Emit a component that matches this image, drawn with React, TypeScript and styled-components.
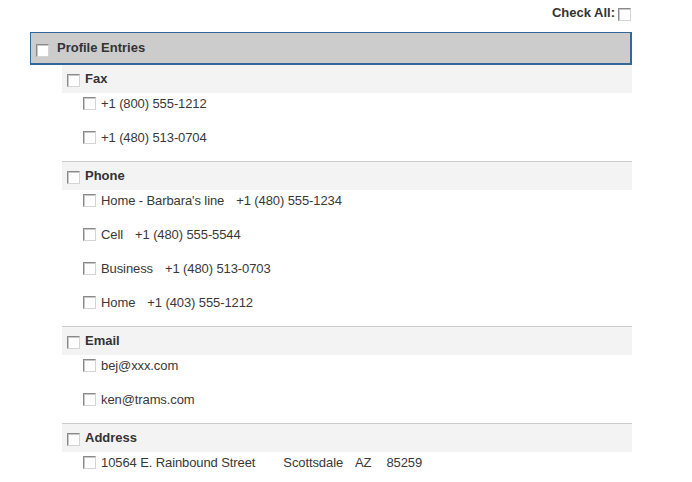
import React from "react";
import styled, { createGlobalStyle } from "styled-components";

const Global = createGlobalStyle`
  html, body { margin: 0; padding: 0; background: #ffffff; }
  body { font-family: "Liberation Sans", Arial, sans-serif; font-size: 13px; color: #333333; }
`;

const Page = styled.div`
  width: 602px;
  margin-left: 30px;
  padding-top: 6px;
`;

const CheckAllBar = styled.div`
  display: flex;
  justify-content: flex-end;
  align-items: center;
  height: 14px;
  margin-bottom: 12px;
  padding-right: 1px;
  gap: 3px;
`;

const BoldLabel = styled.span`
  font-weight: bold;
  font-size: 13px;
  color: #333333;
  line-height: 14px;
`;

const Box = styled.span<{ $drop?: number }>`
  display: inline-block;
  flex: none;
  box-sizing: border-box;
  width: 13px;
  height: 13px;
  margin-top: ${(p) => (p.$drop ?? 0) * 2}px;
  background: #ffffff;
  border: 1px solid;
  border-color: #8a8a8a #d4d4d4 #d4d4d4 #8a8a8a;
  box-shadow: inset 1px 1px 0 #c8c8c8;
`;

const ProfileHeader = styled.div`
  display: flex;
  align-items: center;
  gap: 8px;
  box-sizing: border-box;
  height: 33px;
  padding-left: 5px;
  background: #cccccc;
  border: 1px solid #336699;
  border-right-width: 2px;
  border-bottom-width: 2px;
`;

const SectionList = styled.div`
  margin-left: 32px;
`;

const Section = styled.div<{ $first?: boolean }>`
  border-top: ${(p) => (p.$first ? "none" : "1px solid #cccccc")};
`;

const SectionHead = styled.div`
  display: flex;
  align-items: center;
  gap: 5px;
  height: 28px;
  padding-left: 5px;
  background: #f3f3f3;
`;

const Items = styled.div`
  padding-left: 21px;
`;

const ItemRow = styled.div`
  display: flex;
  align-items: center;
  height: 20px;
  margin-bottom: 14px;
  color: #383838;
`;

const Part = styled.span<{ $gap: number }>`
  margin-left: ${(p) => p.$gap}px;
  white-space: nowrap;
  line-height: 15px;
  letter-spacing: -0.1px;
`;

type Item = { parts: string[]; gaps?: number[] };
type SectionData = { title: string; items: Item[] };

const data: SectionData[] = [
  {
    title: "Fax",
    items: [{ parts: ["+1 (800) 555-1212"] }, { parts: ["+1 (480) 513-0704"] }],
  },
  {
    title: "Phone",
    items: [
      { parts: ["Home - Barbara's line", "+1 (480) 555-1234"] },
      { parts: ["Cell", "+1 (480) 555-5544"] },
      { parts: ["Business", "+1 (480) 513-0703"] },
      { parts: ["Home", "+1 (403) 555-1212"] },
    ],
  },
  {
    title: "Email",
    items: [{ parts: ["bej@xxx.com"] }, { parts: ["ken@trams.com"] }],
  },
  {
    title: "Address",
    items: [
      {
        parts: ["10564 E. Rainbound Street", "Scottsdale", "AZ", "85259"],
        gaps: [5, 28, 12, 15],
      },
    ],
  },
];

export default function App() {
  return (
    <>
      <Global />
      <Page>
        <CheckAllBar>
          <BoldLabel>Check All:</BoldLabel>
          <Box $drop={1} />
        </CheckAllBar>
        <ProfileHeader>
          <Box $drop={2} />
          <BoldLabel>Profile Entries</BoldLabel>
        </ProfileHeader>
        <SectionList>
          {data.map((s, si) => (
            <Section key={s.title} $first={si === 0}>
              <SectionHead>
                <Box $drop={1} />
                <BoldLabel>{s.title}</BoldLabel>
              </SectionHead>
              <Items>
                {s.items.map((it, ii) => (
                  <ItemRow key={ii}>
                    <Box />
                    {it.parts.map((p, pi) => (
                      <Part key={pi} $gap={it.gaps ? it.gaps[pi] : pi === 0 ? 5 : 12}>
                        {p}
                      </Part>
                    ))}
                  </ItemRow>
                ))}
              </Items>
            </Section>
          ))}
        </SectionList>
      </Page>
    </>
  );
}
